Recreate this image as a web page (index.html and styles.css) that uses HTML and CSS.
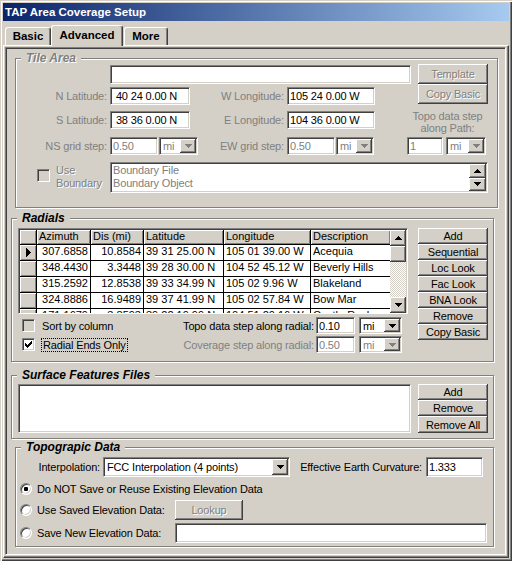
FILE: index.html
```html
<!DOCTYPE html>
<html>
<head>
<meta charset="utf-8">
<link rel="stylesheet" href="styles.css">
</head>
<body>
<div class="window">
  <div class="titlebar">TAP Area Coverage Setup</div>
  <div class="tabs">
    <div class="tab t-basic">Basic</div>
    <div class="tab t-adv sel">Advanced</div>
    <div class="tab t-more">More</div>
  </div>
  <div class="page">
    <div class="inner">

      <div class="group g-tile">
        <span class="legend emb">Tile Area</span>
        <div class="tile-top">
          <div class="tile-left">
            <div class="row r-a"><div class="edit w-name"></div></div>
            <div class="row r-b">
              <span class="lbl dis l1">N Latitude:</span>
              <div class="edit w-lat">&nbsp;40 24 0.00 N</div>
              <span class="lbl dis l2">W Longitude:</span>
              <div class="edit w-lon">105 24 0.00 W</div>
            </div>
            <div class="row r-c">
              <span class="lbl dis l1">S Latitude:</span>
              <div class="edit w-lat">&nbsp;38 36 0.00 N</div>
              <span class="lbl dis l2">E Longitude:</span>
              <div class="edit w-lon">104 36 0.00 W</div>
            </div>
            <div class="row r-d">
              <span class="lbl dis l1">NS grid step:</span>
              <div class="edit dis w-step">0.50</div>
              <div class="combo dis u-step"><span class="ctext">mi</span><span class="drop"><svg width="7" height="4" viewBox="0 0 7 4"><path class="arr dimarr" d="M0 0h7v1H0zM1 1h5v1H1zM2 2h3v1H2zM3 3h1v1H3z"/></svg></span></div>
              <span class="lbl dis l2d">EW grid step:</span>
              <div class="edit dis w-step">0.50</div>
              <div class="combo dis u-step2"><span class="ctext">mi</span><span class="drop"><svg width="7" height="4" viewBox="0 0 7 4"><path class="arr dimarr" d="M0 0h7v1H0zM1 1h5v1H1zM2 2h3v1H2zM3 3h1v1H3z"/></svg></span></div>
            </div>
          </div>
          <div class="tile-right">
            <div class="btn emb tbtn">Template</div>
            <div class="btn emb tbtn">Copy Basic</div>
            <div class="topo-path dis">Topo data step<br>along Path:</div>
            <div class="row tp-row">
              <div class="edit dis tp-field">1</div>
              <div class="combo dis tp-unit"><span class="ctext">mi</span><span class="drop"><svg width="7" height="4" viewBox="0 0 7 4"><path class="arr dimarr" d="M0 0h7v1H0zM1 1h5v1H1zM2 2h3v1H2zM3 3h1v1H3z"/></svg></span></div>
            </div>
          </div>
        </div>
        <div class="tile-bottom">
          <div class="bchk">
            <span class="chk face"></span>
            <span class="bchk-lbl emb">Use<br>Boundary</span>
          </div>
          <div class="edit blist">
            <div class="blist-text dis">Boundary File<br>Boundary Object</div>
            <div class="spin">
              <span class="sbtn"><svg width="7" height="4" viewBox="0 0 7 4"><path class="arr" d="M3 0h1v1H3zM2 1h3v1H2zM1 2h5v1H1zM0 3h7v1H0z"/></svg></span>
              <span class="sbtn"><svg width="7" height="4" viewBox="0 0 7 4"><path class="arr" d="M0 0h7v1H0zM1 1h5v1H1zM2 2h3v1H2zM3 3h1v1H3z"/></svg></span>
            </div>
          </div>
        </div>
      </div>

      <div class="group g-rad">
        <span class="legend">Radials</span>
        <div class="rad-body">
          <div class="rad-left">
            <div class="sgrid">
              <div class="cells">
                <div class="fc"></div><div class="fh">Azimuth</div><div class="fh">Dis (mi)</div><div class="fh">Latitude</div><div class="fh">Longitude</div><div class="fh">Description</div>
                <div class="fc"><svg width="5" height="9" viewBox="0 0 5 9"><path d="M0 0h1v9H0zM1 1h1v7H1zM2 2h1v5H2zM3 3h1v3H3zM4 4h1v1H4z"/></svg></div><div class="c r">307.6858</div><div class="c r">10.8584</div><div class="c">39 31 25.00 N</div><div class="c">105 01 39.00 W</div><div class="c">Acequia</div>
                <div class="fc"></div><div class="c r">348.4430</div><div class="c r">3.3448</div><div class="c">39 28 30.00 N</div><div class="c">104 52 45.12 W</div><div class="c">Beverly Hills</div>
                <div class="fc"></div><div class="c r">315.2592</div><div class="c r">12.8538</div><div class="c">39 33 34.99 N</div><div class="c">105 02 9.96 W</div><div class="c">Blakeland</div>
                <div class="fc"></div><div class="c r">324.8886</div><div class="c r">16.9489</div><div class="c">39 37 41.99 N</div><div class="c">105 02 57.84 W</div><div class="c">Bow Mar</div>
                <div class="fc"></div><div class="c r">171.1679</div><div class="c r">3.8593</div><div class="c">39 22 19.99 N</div><div class="c">104 51 20.16 W</div><div class="c">Castle Rock</div>
              </div>
              <div class="vscroll">
                <span class="sbtn sq"><svg width="7" height="4" viewBox="0 0 7 4"><path class="arr" d="M3 0h1v1H3zM2 1h3v1H2zM1 2h5v1H1zM0 3h7v1H0z"/></svg></span>
                <span class="sbtn sq"></span>
                <span class="track"></span>
                <span class="sbtn sq"><svg width="7" height="4" viewBox="0 0 7 4"><path class="arr" d="M0 0h7v1H0zM1 1h5v1H1zM2 2h3v1H2zM3 3h1v1H3z"/></svg></span>
              </div>
            </div>
            <div class="opt-row o1">
              <div class="opt-check"><span class="chk face"></span><span class="chk-lbl">Sort by column</span></div>
              <span class="opt-lbl">Topo data step along radial:</span>
              <div class="edit o-field">0.10</div>
              <div class="combo o-unit"><span class="ctext">mi</span><span class="drop"><svg width="7" height="4" viewBox="0 0 7 4"><path class="arr" d="M0 0h7v1H0zM1 1h5v1H1zM2 2h3v1H2zM3 3h1v1H3z"/></svg></span></div>
            </div>
            <div class="opt-row o2">
              <div class="opt-check"><span class="chk"><svg width="7" height="7" viewBox="0 0 7 7"><path d="M0 2h1v3H0zM1 3h1v3H1zM2 4h1v3H2zM3 3h1v3H3zM4 2h1v3H4zM5 1h1v3H5zM6 0h1v3H6z"/></svg></span><span class="chk-lbl"><span class="focus">Radial Ends Only</span></span></div>
              <span class="opt-lbl dis">Coverage step along radial:</span>
              <div class="edit dis o-field">0.50</div>
              <div class="combo dis o-unit"><span class="ctext">mi</span><span class="drop"><svg width="7" height="4" viewBox="0 0 7 4"><path class="arr dimarr" d="M0 0h7v1H0zM1 1h5v1H1zM2 2h3v1H2zM3 3h1v1H3z"/></svg></span></div>
            </div>
          </div>
          <div class="btncol">
            <div class="btn">Add</div>
            <div class="btn">Sequential</div>
            <div class="btn">Loc Look</div>
            <div class="btn">Fac Look</div>
            <div class="btn">BNA Look</div>
            <div class="btn">Remove</div>
            <div class="btn">Copy Basic</div>
          </div>
        </div>
      </div>

      <div class="group g-surf">
        <span class="legend">Surface Features Files</span>
        <div class="surf-body">
          <div class="edit slist"></div>
          <div class="btncol sbcol">
            <div class="btn">Add</div>
            <div class="btn">Remove</div>
            <div class="btn last">Remove All</div>
          </div>
        </div>
      </div>

      <div class="group g-topo">
        <span class="legend">Topograpic Data</span>
        <div class="row t-row1">
          <span class="lbl interp-lbl">Interpolation:</span>
          <div class="combo f-interp"><span class="ctext">FCC Interpolation (4 points)</span><span class="drop"><svg width="7" height="4" viewBox="0 0 7 4"><path class="arr" d="M0 0h7v1H0zM1 1h5v1H1zM2 2h3v1H2zM3 3h1v1H3z"/></svg></span></div>
          <span class="lbl eec-lbl">Effective Earth Curvature:</span>
          <div class="edit f-eec">1.333</div>
        </div>
        <div class="row radio-row rr1">
          <div class="rcell"><span class="radio on"></span><span class="rlbl">Do NOT Save or Reuse Existing Elevation Data</span></div>
        </div>
        <div class="row radio-row rr2">
          <div class="rcell"><span class="radio"></span><span class="rlbl">Use Saved Elevation Data:</span></div>
          <div class="btn emb lookup">Lookup</div>
        </div>
        <div class="row radio-row rr3">
          <div class="rcell"><span class="radio"></span><span class="rlbl">Save New Elevation Data:</span></div>
          <div class="edit f-save"></div>
        </div>
      </div>

    </div>
  </div>
</div>
</body>
</html>
```
FILE: styles.css
```css
* { box-sizing: border-box; }
html, body { margin: 0; padding: 0; }
body {
  background: #D4D0C8;
  font-family: "Liberation Sans", Arial, sans-serif;
  font-size: 11px;
  letter-spacing: -0.15px;
  color: #000;
}
.window {
  width: 512px;
  height: 561px;
  padding: 3px;
  display: flex;
  flex-direction: column;
  box-shadow: inset 1px 1px 0 #D4D0C8, inset 2px 2px 0 #fff,
              inset -1px -1px 0 #404040, inset -2px -2px 0 #808080;
}
.titlebar {
  height: 18px;
  flex: none;
  background: linear-gradient(to right, #0A246A, #A6CAF0);
  color: #fff;
  font-weight: bold;
  font-size: 11.5px;
  letter-spacing: 0;
  line-height: 18px;
  padding-left: 2px;
  white-space: nowrap;
}
.tabs {
  height: 24px;
  flex: none;
  display: flex;
  align-items: flex-end;
  padding-left: 2px;
}
.tab {
  height: 18px;
  border-top: 1px solid #fff;
  border-left: 1px solid #fff;
  border-right: 1px solid #404040;
  border-radius: 3px 3px 0 0;
  box-shadow: inset -1px 0 0 #808080;
  font-weight: bold;
  font-size: 11.5px;
  letter-spacing: 0;
  line-height: 16px;
  text-align: center;
  background: #D4D0C8;
}
.t-basic { width: 46px; }
.t-adv { width: 72px; }
.t-more { width: 44px; margin-left: 1px; }
.tab.sel {
  height: 21px;
  margin-bottom: -1px;
  padding-top: 1px;
  position: relative;
  z-index: 2;
}
.page {
  flex: 1;
  display: flex;
  border-top: 1px solid #fff;
  border-left: 1px solid #fff;
  border-right: 1px solid #404040;
  border-bottom: 1px solid #404040;
  box-shadow: inset -1px -1px 0 #808080;
  padding: 1px 2px 2px 1px;
}
.inner {
  flex: 1;
  display: flex;
  flex-direction: column;
  align-items: flex-start;
  border: 1px solid;
  border-color: #808080 #fff #fff #808080;
  box-shadow: inset 1px 1px 0 #404040, inset -1px -1px 0 #D4D0C8;
  padding: 1px;
}

/* group boxes */
.group {
  position: relative;
  flex: none;
  border: 1px solid #808080;
  box-shadow: inset 1px 1px 0 #fff, 1px 1px 0 #fff;
}
.legend {
  position: absolute;
  top: -8px;
  left: 5px;
  padding: 0 5px;
  background: #D4D0C8;
  font-style: italic;
  font-weight: bold;
  font-size: 12px;
  letter-spacing: 0;
  line-height: 14px;
  white-space: nowrap;
}

/* common controls */
.row { display: flex; align-items: center; }
.lbl { white-space: nowrap; flex: none; }
.dis { color: #808080; }
.emb { color: #808080; text-shadow: 1px 1px 0 #fff; }
.edit {
  flex: none;
  background: #fff;
  border: 1px solid;
  border-color: #808080 #fff #fff #808080;
  box-shadow: inset 1px 1px 0 #404040, inset -1px -1px 0 #D4D0C8;
  padding: 0 2px;
  white-space: nowrap;
  overflow: hidden;
  display: flex;
  align-items: center;
}
.combo {
  flex: none;
  display: flex;
  background: #fff;
  border: 1px solid;
  border-color: #808080 #fff #fff #808080;
  box-shadow: inset 1px 1px 0 #404040, inset -1px -1px 0 #D4D0C8;
  padding: 1px;
}
.ctext {
  flex: 1;
  display: flex;
  align-items: center;
  padding-left: 2px;
  white-space: nowrap;
  overflow: hidden;
}
.drop, .sbtn {
  flex: none;
  width: 16px;
  display: flex;
  align-items: center;
  justify-content: center;
  background: #D4D0C8;
  box-shadow: inset -1px -1px 0 #404040, inset 1px 1px 0 #fff,
              inset -2px -2px 0 #808080;
}
.arr { fill: #000; }
.dimarr { fill: #808080; }
.btn {
  flex: none;
  display: flex;
  align-items: center;
  justify-content: center;
  background: #D4D0C8;
  box-shadow: inset -1px -1px 0 #404040, inset 1px 1px 0 #fff,
              inset -2px -2px 0 #808080;
  white-space: nowrap;
}
.chk {
  flex: none;
  width: 13px;
  height: 13px;
  background: #fff;
  border: 1px solid;
  border-color: #808080 #fff #fff #808080;
  box-shadow: inset 1px 1px 0 #404040, inset -1px -1px 0 #D4D0C8;
  display: flex;
  align-items: center;
  justify-content: center;
}
.chk.face { background: #D4D0C8; }
.radio {
  flex: none;
  width: 12px;
  height: 12px;
  border-radius: 50%;
  background: #fff;
  border: 1px solid;
  border-color: #808080 #fff #fff #808080;
  box-shadow: inset 1px 1px 0 #404040, inset -1px -1px 0 #D4D0C8;
  display: flex;
  align-items: center;
  justify-content: center;
}
.radio.on::after {
  content: "";
  width: 4px;
  height: 4px;
  border-radius: 1px;
  background: #000;
}

/* Tile Area */
.g-tile { margin: 9px 0 0 8px; width: 483px; height: 150px; }
.tile-top { display: flex; }
.tile-left { width: 389px; flex: none; }
.r-a { margin-top: 6px; height: 19px; }
.w-name { margin-left: 94px; width: 301px; height: 19px; }
.r-b { margin-top: 3px; height: 18px; }
.r-c { margin-top: 6px; height: 18px; }
.r-d { margin-top: 8px; height: 18px; }
.l1 { width: 91px; text-align: right; margin-right: 3px; }
.l2 { width: 94px; text-align: right; margin-right: 3px; }
.l2d { width: 86px; text-align: right; margin-right: 3px; }
.w-lat { width: 80px; height: 18px; }
.w-lon { width: 88px; height: 18px; }
.w-step { width: 48px; height: 18px; }
.u-step { margin-left: 1px; width: 39px; height: 18px; }
.u-step2 { margin-left: 1px; width: 38px; height: 18px; }
.tile-right { width: 85px; flex: none; padding-top: 5px; }
.tbtn { margin-left: 13px; width: 70px; height: 20px; }
.topo-path { margin-top: 6px; line-height: 12px; text-align: center; }
.tp-row { margin-top: 3px; height: 18px; }
.tp-field { margin-left: 2px; width: 36px; height: 18px; }
.tp-unit { margin-left: 3px; width: 40px; height: 18px; }
.tile-bottom { display: flex; margin-top: 7px; height: 31px; }
.bchk { width: 94px; flex: none; display: flex; align-items: flex-start; padding-left: 21px; }
.bchk .chk { margin-top: 7px; }
.bchk-lbl { margin-left: 6px; margin-top: 2px; line-height: 13px; }
.blist { width: 378px; height: 31px; padding: 1px 1px 1px 2px; align-items: stretch; }
.blist-text { flex: 1; line-height: 13px; }
.spin { width: 17px; flex: none; display: flex; flex-direction: column; }
.spin .sbtn { width: 17px; flex: 1; }

/* Radials */
.g-rad { margin: 10px 0 0 4px; width: 483px; height: 144px; }
.rad-body { display: flex; }
.rad-left { width: 406px; flex: none; }
.sgrid {
  margin: 9px 0 0 6px;
  width: 390px;
  height: 86px;
  display: flex;
  border: 1px solid;
  border-color: #808080 #fff #fff #808080;
  box-shadow: inset 1px 1px 0 #404040, inset -1px 0 0 #D4D0C8;
  padding: 1px 1px 0 1px;
  overflow: hidden;
}
.cells {
  width: 370px;
  flex: none;
  display: grid;
  grid-template-columns: 16px 53px 52px 79px 86px 79px;
  grid-template-rows: 14px;
  grid-auto-rows: 15px;
  gap: 1px;
  background: #000;
  align-content: start;
  overflow: hidden;
  letter-spacing: 0;
}
.fh, .fc {
  background: #D4D0C8;
  box-shadow: inset 1px 1px 0 #fff, inset -1px -1px 0 #808080;
  line-height: 12px;
  padding: 0 2px;
  white-space: nowrap;
  overflow: hidden;
}
.fc { display: flex; align-items: center; justify-content: center; }
.c {
  background: #fff;
  line-height: 12px;
  padding: 0 2px;
  white-space: nowrap;
  overflow: hidden;
}
.c.r { text-align: right; }
.vscroll { width: 16px; flex: none; display: flex; flex-direction: column; }
.sbtn.sq { height: 16px; }
.track {
  flex: 1;
  background: repeating-conic-gradient(#fff 0 25%, #D4D0C8 0 50%) 0 0 / 2px 2px;
}
.opt-row { display: flex; align-items: center; height: 17px; }
.o1 { margin-top: 3px; }
.o2 { margin-top: 2px; }
.opt-check { width: 161px; flex: none; display: flex; align-items: center; padding-left: 10px; }
.chk-lbl { margin-left: 7px; white-space: nowrap; }
.focus { outline: 1px dotted #000; padding: 0 1px; }
.opt-lbl { width: 141px; flex: none; text-align: right; white-space: nowrap; }
.o-field { margin-left: 2px; width: 39px; height: 17px; }
.o-unit { margin-left: 4px; width: 43px; height: 17px; }
.btncol { display: flex; flex-direction: column; width: 70px; flex: none; margin-top: 9px; }
.btncol .btn { height: 16px; }

/* Surface */
.g-surf { margin: 13px 0 0 4px; width: 483px; height: 64px; }
.surf-body { display: flex; padding: 8px 0 0 6px; }
.slist { width: 393px; height: 49px; }
.sbcol { margin: 0 0 0 7px; }
.sbcol .btn.last { height: 17px; }

/* Topographic */
.g-topo { margin: 8px 0 0 8px; width: 479px; height: 100px; }
.t-row1 { margin-top: 9px; height: 20px; }
.interp-lbl { width: 84px; text-align: right; margin-right: 3px; }
.f-interp { width: 187px; height: 20px; }
.eec-lbl {
  margin-left: 12px;
  width: 120px;
  margin-right: 4px;
  display: flex;
  justify-content: flex-end;
}
.f-eec { width: 57px; height: 20px; }
.radio-row { margin-top: 3px; }
.rr1 { height: 17px; }
.rr2, .rr3 { height: 20px; }
.rcell { width: 159px; flex: none; display: flex; align-items: center; padding-left: 4px; }
.rlbl { margin-left: 5px; white-space: nowrap; }
.lookup { width: 68px; height: 20px; }
.f-save { width: 312px; height: 20px; }
```
